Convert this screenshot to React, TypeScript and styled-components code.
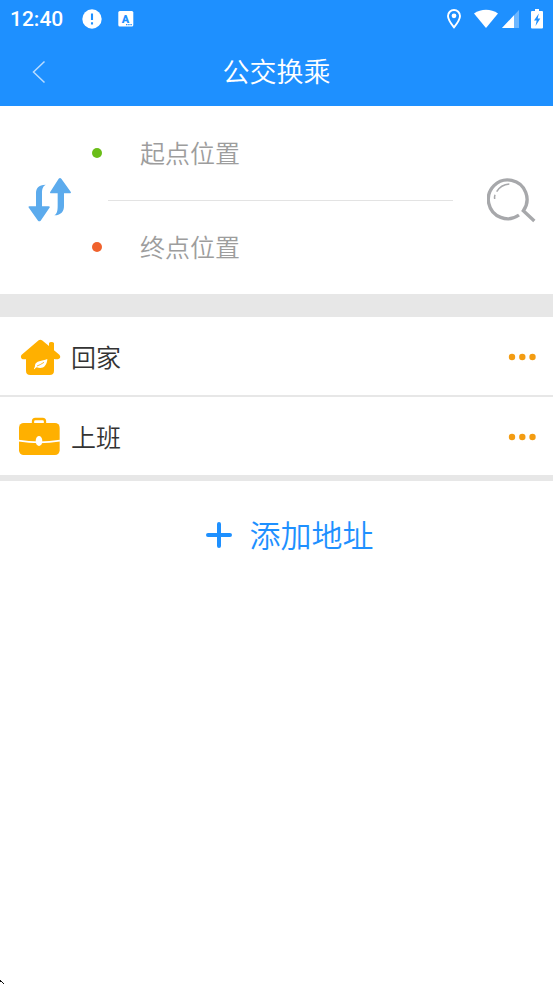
import React from 'react';
import styled, { createGlobalStyle } from 'styled-components';

const GlobalStyle = createGlobalStyle`
  *, *::before, *::after { box-sizing: border-box; }
  html, body { margin: 0; background: #fff; }
  body, button, input { font-family: "Noto Sans CJK SC", sans-serif; font-weight: 350; }
  svg { display: block; flex: none; }
`;

const Page = styled.div`
  display: flex;
  flex-direction: column;
  min-height: 100vh;
  background: #fff;
`;

const TopArea = styled.header`
  background: #1e90ff;
  color: #fff;
`;

const StatusBar = styled.div`
  display: flex;
  align-items: center;
  justify-content: space-between;
  height: 37px;
  padding: 0 10px;
`;

const StatusGroup = styled.div<{ $gap: number }>`
  display: flex;
  align-items: center;
  gap: ${({ $gap }) => $gap}px;
`;

const Clock = styled.time`
  margin-right: 3px;
  font: 500 21px/26px Roboto, sans-serif;
`;

const TitleBar = styled.div`
  display: grid;
  grid-template-columns: 78px 1fr 78px;
  align-items: center;
  height: 69px;
`;

const Title = styled.h1`
  margin: 0;
  padding-bottom: 2px;
  font-size: 27px;
  font-weight: 350;
  line-height: 40px;
  text-align: center;
`;

const IconButton = styled.button`
  display: flex;
  align-items: center;
  justify-content: center;
  align-self: stretch;
  padding: 0;
  border: 0;
  background: none;
  cursor: pointer;
`;

const RoutePanel = styled.form`
  display: grid;
  grid-template-columns: 92px 1fr 84px;
`;

const SwapButton = styled(IconButton)`
  padding: 0 0 2px 7px;
`;

const SearchButton = styled(IconButton)`
  padding: 2px 0 0 2px;
`;

const MoreButton = styled(IconButton)`
  padding: 2px 4px 0;
`;

const Fields = styled.div`
  min-width: 0;
`;

const Field = styled.label`
  display: flex;
  align-items: center;
  gap: 38px;
  height: 94px;
`;

const Divider = styled.hr`
  height: 1px;
  margin: 0 16px -1px;
  border: 0;
  background: #e3e3e3;
`;

const Dot = styled.span<{ $color: string }>`
  flex: none;
  width: 10px;
  height: 10px;
  border-radius: 50%;
  background: ${({ $color }) => $color};
`;

const PlaceInput = styled.input`
  flex: 1;
  min-width: 0;
  height: 48px;
  padding: 0 0 2px;
  border: 0;
  outline: 0;
  background: none;
  color: #333;
  font-size: 25px;

  &::placeholder { color: #9d9d9d; opacity: 1; }
`;

const Band = styled.div<{ $height: number }>`
  height: ${({ $height }) => $height}px;
  background: #e7e7e7;
`;

const List = styled.ul`
  margin: 0;
  padding: 0;
  list-style: none;
`;

const Row = styled.li`
  display: flex;
  align-items: center;
  height: 78px;
  padding: 0 12px 0 18px;

  & + & {
    height: 80px;
    border-top: 2px solid #e7e7e7;
  }
`;

const RowLabel = styled.span`
  flex: 1;
  margin-left: 9px;
  color: #333;
  font-size: 25px;
  line-height: 36px;
`;

const AddBar = styled.div`
  display: grid;
`;

const AddButton = styled.button`
  display: flex;
  align-items: center;
  justify-content: center;
  gap: 18px;
  height: 108px;
  padding: 0 0 0 26px;
  border: 0;
  background: none;
  color: #1e90ff;
  font-size: 31px;
  line-height: 44px;
  cursor: pointer;
`;

const AddLabel = styled.span`
  padding-bottom: 2px;
`;

const Pointer = styled.svg`
  position: fixed;
  left: 0;
  bottom: 0;
`;

const AlertIcon = () => (
  <svg width="20" height="20" viewBox="0 0 20 20" aria-hidden="true">
    <circle cx="10" cy="10" r="9.7" fill="#fff" />
    <path d="M10 4.5v6.5M10 13.2v2.2" stroke="#1e90ff" strokeWidth="2.1" />
  </svg>
);

const InputMethodIcon = () => (
  <svg width="16" height="16" viewBox="0 0 16 16" aria-hidden="true">
    <rect x="0.3" y="0" width="15" height="15.6" rx="1.5" fill="#fff" />
    <text x="7.5" y="11.5" textAnchor="middle" fill="#1e90ff" fontFamily="Roboto, sans-serif" fontWeight="900" fontSize="11">A</text>
    <path d="M8 13.6h6" stroke="#1e90ff" strokeWidth="1.2" strokeDasharray="1.4 .8" />
  </svg>
);

const LocationIcon = () => (
  <svg width="15" height="20" viewBox="0 0 15 20" aria-hidden="true">
    <path d="M7 1a6 6 0 0 0-6 6c0 4 3.6 8.4 6 11.3C9.4 15.4 13 11 13 7a6 6 0 0 0-6-6Z" fill="none" stroke="#fff" strokeWidth="1.9" />
    <circle cx="7" cy="6.8" r="2.4" fill="#fff" />
  </svg>
);

const WifiIcon = () => (
  <svg width="24" height="20" viewBox="0 0 24 20" aria-hidden="true">
    <path d="M0 4.5C7-.5 17-.5 24 4.5L12 19Z" fill="#fff" />
  </svg>
);

const SignalIcon = () => (
  <svg width="17" height="18" viewBox="0 0 17 18" aria-hidden="true">
    <path d="M17 0v18H0Z" fill="#fff" opacity=".35" />
    <path d="M12 5.3V18H0Z" fill="#fff" />
  </svg>
);

const BatteryIcon = () => (
  <svg width="12" height="20" viewBox="0 0 12 20" aria-hidden="true">
    <path d="M4 0h4v2h3a1 1 0 0 1 1 1v15.5a1 1 0 0 1-1 1H1a1 1 0 0 1-1-1V3a1 1 0 0 1 1-1h3Z" fill="#fff" />
    <path d="M7.800 4.500 3 11.500h2.700L4.500 17 9.300 9.600H6.700Z" fill="#1e90ff" />
  </svg>
);

const BackIcon = () => (
  <svg width="14" height="24" viewBox="0 0 14 24" aria-hidden="true">
    <path d="M12.5 1.5 1.5 12l11 10.5" fill="none" stroke="#b9dcff" strokeWidth="1.5" />
  </svg>
);

const SwapIcon = () => (
  <svg width="45" height="45" viewBox="36 140 135 135" fill="#5cabed" aria-hidden="true">
    <path d="M92 163C70 163 63 174 63 190V228H43Q38 228 42 233L69 271Q73 275 77 271L103 233Q107 228 101 228H81V190C81 174 84 168 92 163Z" />
    <path d="M118 255C140 254 147 242 147 226V189H165Q170 189 167 184L139 145Q135 141 131 145L106 184Q103 189 109 189H128V226C128 242 126 250 118 255Z" />
  </svg>
);

const SearchIcon = () => (
  <svg width="50" height="50" viewBox="48 48 150 150" fill="none" stroke="#a7a8ab" aria-hidden="true">
    <path d="M144 165A58 58 0 1 1 157 152L190 183" strokeWidth="10" />
    <path d="M115 72Q89 74 77 95M72 104Q70 109 71 117" strokeWidth="4.5" />
  </svg>
);

const HomeIcon = () => (
  <svg width="44" height="42" viewBox="54 45 132 126" aria-hidden="true">
    <path d="M116 61Q121 57 126 61L147 78V70Q148 66 154 66Q161 66 162 70V91L178 104Q184 111 177 116Q172 119 162 117V152Q162 165 149 165H91Q78 165 78 152V118H68Q59 112 65 104Z" fill="#ffb000" />
    <path d="M102 147C104 142 105 140 105 136C107 122 126 123 142 117C141 138 128 149 110 142Q106 143 104 148Z" fill="#fff" />
    <path d="M111 138Q120 135 132 127" fill="none" stroke="#ffb000" strokeWidth="2.5" />
  </svg>
);

const BriefcaseIcon = () => (
  <svg width="44" height="42" viewBox="54 285 132 126" aria-hidden="true">
    <path d="M99 312V304Q99 297 106 297H128Q135 297 135 304V312" fill="none" stroke="#ffb000" strokeWidth="7" />
    <rect x="57" y="309" width="122" height="96" rx="14" fill="#ffb000" />
    <path d="M56 362Q117 372 180 362" fill="none" stroke="#fff" strokeWidth="5" />
    <ellipse cx="117" cy="363" rx="10" ry="15" fill="#fff" />
  </svg>
);

const MoreIcon = () => (
  <svg width="29" height="8" viewBox="0 0 29 8" fill="#f39c12" aria-hidden="true">
    <circle cx="4" cy="4" r="3.2" />
    <circle cx="14.3" cy="4" r="3.2" />
    <circle cx="24.5" cy="4" r="3.2" />
  </svg>
);

const PlusIcon = () => (
  <svg width="26" height="26" viewBox="0 0 26 26" aria-hidden="true">
    <path d="M13 2v22M2 13h22" stroke="#1e90ff" strokeWidth="4" strokeLinecap="round" />
  </svg>
);

const places = [
  { name: '回家', Icon: HomeIcon },
  { name: '上班', Icon: BriefcaseIcon },
];

export default function App() {
  return (
    <Page>
      <GlobalStyle />
      <TopArea>
        <StatusBar>
          <StatusGroup $gap={16}>
            <Clock>12:40</Clock>
            <AlertIcon />
            <InputMethodIcon />
          </StatusGroup>
          <StatusGroup $gap={12}>
            <LocationIcon />
            <StatusGroup $gap={4}>
              <WifiIcon />
              <SignalIcon />
            </StatusGroup>
            <BatteryIcon />
          </StatusGroup>
        </StatusBar>
        <TitleBar>
          <IconButton type="button" aria-label="返回">
            <BackIcon />
          </IconButton>
          <Title>公交换乘</Title>
        </TitleBar>
      </TopArea>
      <main>
        <RoutePanel onSubmit={(e: React.FormEvent) => e.preventDefault()}>
          <SwapButton type="button" aria-label="交换起点和终点">
            <SwapIcon />
          </SwapButton>
          <Fields>
            <Field>
              <Dot $color="#6abd18" />
              <PlaceInput aria-label="起点位置" placeholder="起点位置" />
            </Field>
            <Divider />
            <Field>
              <Dot $color="#f0622d" />
              <PlaceInput aria-label="终点位置" placeholder="终点位置" />
            </Field>
          </Fields>
          <SearchButton type="submit" aria-label="搜索">
            <SearchIcon />
          </SearchButton>
        </RoutePanel>
        <Band $height={23} />
        <List>
          {places.map(({ name, Icon }) => (
            <Row key={name}>
              <Icon />
              <RowLabel>{name}</RowLabel>
              <MoreButton type="button" aria-label={`${name}更多`}>
                <MoreIcon />
              </MoreButton>
            </Row>
          ))}
        </List>
        <Band $height={6} />
        <AddBar>
          <AddButton type="button">
            <PlusIcon />
            <AddLabel>添加地址</AddLabel>
          </AddButton>
        </AddBar>
      </main>
      <Pointer width="4" height="4" viewBox="0 0 4 4" aria-hidden="true">
        <path d="M0 0h1v2H0zM1 1h1v1H1zM2 2h1v1H2zM3 3h1v1H3z" fill="#111" />
      </Pointer>
    </Page>
  );
}
